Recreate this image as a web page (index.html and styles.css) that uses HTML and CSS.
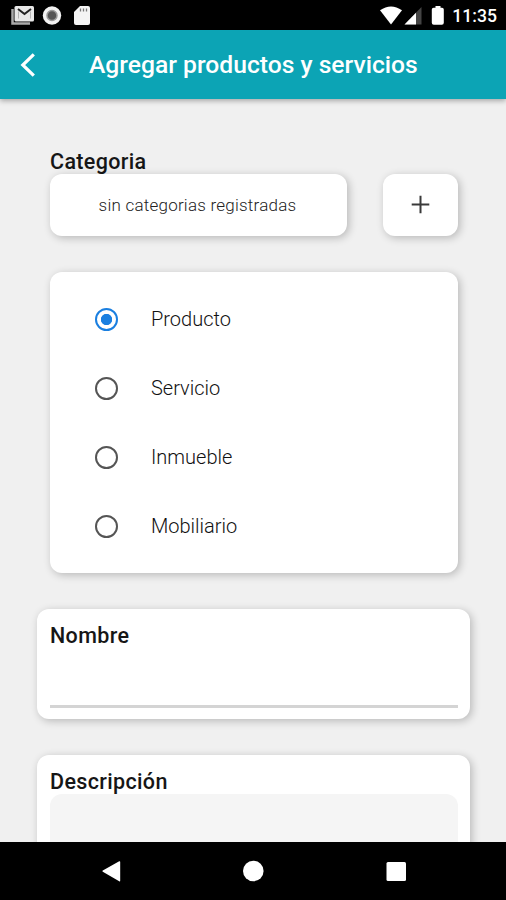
FILE: index.html
```html
<!DOCTYPE html>
<html lang="es">
<head>
<meta charset="utf-8">
<title>Agregar productos y servicios</title>
<link rel="stylesheet" href="styles.css">
</head>
<body>
<div class="phone">
  <div class="status">
    <svg class="notifications" width="100" height="30" viewBox="0 0 100 30" aria-hidden="true">
      <path d="M12.500 9v14.500h17.500" fill="none" stroke="#aaa" stroke-width="2.500"/>
      <rect x="14.500" y="6" width="19.500" height="15.500" rx="1.500" fill="#e8e8e8"/>
      <path d="M18 9l6.500 5L31 9" fill="none" stroke="#222" stroke-width="2"/>
      <path d="M18.500 11.500v7M30.500 11.500v7" fill="none" stroke="#b5b5b5" stroke-width="1"/>
      <circle cx="52" cy="15.500" r="9.200" fill="#f2f2f2"/>
      <circle cx="52" cy="15.500" r="5" fill="#555" stroke="#999" stroke-width="1.500"/>
      <path d="M80 6h8q2 0 2 2v15q0 2-2 2H76q-2 0-2-2V12z" fill="#f4f4f4"/>
      <path d="M80.500 8.500v3M83.500 8.500v3M86.500 8.500v3" stroke="#777" stroke-width="1.300"/>
    </svg>
    <div class="status-right">
      <svg width="68" height="30" viewBox="0 0 68 30" aria-hidden="true">
        <path d="M1 10.300Q12 2.500 23 10.300L12 24.500z" fill="#fff"/>
        <path d="M42.500 7v17.500h-17z" fill="#444"/>
        <path d="M37 12.700v11.800H25.500z" fill="#fff"/>
        <path d="M56.500 6h5v1.800h1.500q1.800 0 1.800 1.800v13.200q0 2-2 2h-8q-2 0-2-2V9.600q0-1.800 1.800-1.800h1.900z" fill="#fff"/>
      </svg>
      <span class="clock">11:35</span>
    </div>
  </div>
  <header class="appbar">
    <svg class="back" width="16" height="26" viewBox="0 0 16 26" aria-hidden="true"><path d="M13.800 2.300L2.800 13l11 10.700" fill="none" stroke="#fff" stroke-width="3.200"/></svg>
    <h1 class="title">Agregar productos y servicios</h1>
  </header>
  <main class="content">
    <section class="category">
      <h2 class="label">Categoria</h2>
      <div class="category-row">
        <div class="card picker"><span class="picker-text">sin categorias registradas</span></div>
        <button class="card add" type="button" aria-label="Agregar"><svg width="20" height="20" viewBox="0 0 20 20"><path d="M9.500.7v17.600M.7 9.500h17.600" stroke="#3a3a3a" stroke-width="2"/></svg></button>
      </div>
    </section>
    <section class="card options">
      <div class="option"><span class="radio radio-on"></span><span class="option-text">Producto</span></div>
      <div class="option"><span class="radio"></span><span class="option-text">Servicio</span></div>
      <div class="option"><span class="radio"></span><span class="option-text">Inmueble</span></div>
      <div class="option"><span class="radio"></span><span class="option-text">Mobiliario</span></div>
    </section>
    <section class="card field name">
      <h2 class="label">Nombre</h2>
      <div class="line"></div>
    </section>
    <section class="card field description">
      <h2 class="label">Descripción</h2>
      <div class="area"></div>
    </section>
  </main>
  <nav class="navbar">
    <svg width="506" height="58" viewBox="0 0 506 58" aria-hidden="true">
      <path d="M119.200 19.300L102.800 28.600q-1 .6 0 1.200l16.400 9.500q1 .6 1-.6V20.100q0-1.200-1-.8z" fill="#fff"/>
      <circle cx="253.300" cy="29" r="10.300" fill="#fff"/>
      <rect x="386.500" y="20" width="19.500" height="19" rx="1.500" fill="#fff"/>
    </svg>
  </nav>
</div>
</body>
</html>
```
FILE: styles.css
```css
* { box-sizing: border-box; }

body {
  margin: 0;
  font-family: Roboto, sans-serif;
  background: #000;
}

.phone {
  width: 506px;
  height: 900px;
  display: flex;
  flex-direction: column;
  overflow: hidden;
  background: #f0f0f0;
}

.status {
  height: 30px;
  flex: none;
  display: flex;
  justify-content: space-between;
  background: #000;
}

.status-right {
  display: flex;
  align-items: center;
  padding-right: 9px;
}

.status-right svg { margin-right: 5px; }

.clock {
  color: #fff;
  font-size: 17.600px;
  font-weight: 500;
  line-height: 30px;
  padding-top: 2px;
}

.appbar {
  height: 69px;
  flex: none;
  display: flex;
  align-items: center;
  padding-left: 20px;
  background: #0ca4b5;
  box-shadow: 0 2px 5px rgba(0, 0, 0, 0.3);
  z-index: 1;
}

.title {
  margin: 1px 0 0 53px;
  color: #fff;
  font-size: 24.650px;
  font-weight: 500;
  line-height: 30px;
  white-space: nowrap;
}

.content {
  flex: 1;
  min-height: 0;
  overflow: hidden;
  display: flex;
  flex-direction: column;
  gap: 36px;
  padding: 50px 36px 0 37px;
}

.card {
  background: #fff;
  border: 0;
  border-radius: 12px;
  box-shadow: 2px 2px 9px rgba(0, 0, 0, 0.24);
}

.label {
  margin: 0;
  color: #161616;
  font-size: 21.500px;
  font-weight: 500;
  letter-spacing: 0.350px;
  line-height: 26px;
}

.category { margin: 0 12px 0 13px; }

.category-row {
  display: flex;
  justify-content: space-between;
  margin-top: -1px;
}

.picker {
  width: 297px;
  height: 62px;
  display: flex;
  align-items: center;
  justify-content: center;
  color: #222;
  font-size: 17px;
  font-weight: 300;
  letter-spacing: 0.230px;
}

.picker-text { margin-right: 2px; }

.add {
  width: 75px;
  height: 62px;
  padding: 0;
  display: flex;
  align-items: center;
  justify-content: center;
}

.options {
  flex: none;
  height: 301px;
  margin: 0 12px 0 13px;
  padding: 13px 0 0 45px;
}

.option {
  height: 69px;
  display: flex;
  align-items: center;
  gap: 33px;
  color: #111;
  font-size: 20px;
  font-weight: 300;
}

.option-text { margin-top: -1px; }

.radio {
  width: 23px;
  height: 23px;
  border: 2px solid #555;
  border-radius: 50%;
}

.radio-on {
  border-color: #1a7fe0;
  background: radial-gradient(circle, #1a7fe0 5.300px, #fff 6px);
}

.field {
  flex: none;
  padding: 14px 12px 0 13px;
}

.name { height: 110px; }

.description { height: 180px; }

.line {
  height: 3px;
  margin-top: 56px;
  background: #d4d4d4;
}

.area {
  height: 120px;
  margin-top: -1px;
  border-radius: 12px;
  background: #f5f5f5;
}

.navbar {
  height: 58px;
  flex: none;
  background: #000;
}

.navbar svg { display: block; }
```
